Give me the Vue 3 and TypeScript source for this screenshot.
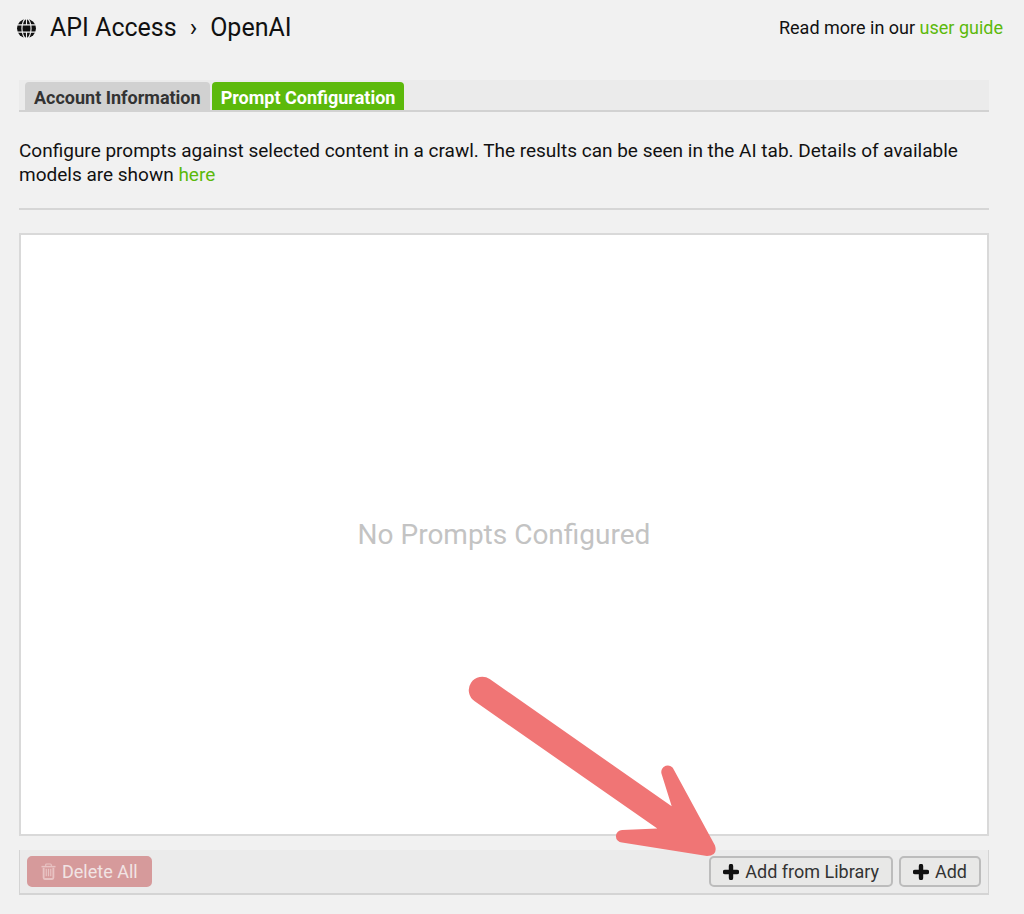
<script setup lang="ts">
import { ref } from 'vue'

interface Tab {
  id: string
  label: string
}

const tabs: Tab[] = [
  { id: 'account', label: 'Account Information' },
  { id: 'prompts', label: 'Prompt Configuration' },
]
const activeTab = ref('prompts')
</script>

<template>
  <main class="page">
    <header class="header">
      <svg class="globe" viewBox="0 0 20 20" aria-hidden="true">
        <circle cx="10" cy="10" r="10" fill="#111" />
        <g fill="none" stroke="#f1f1f1" stroke-width="1.2">
          <ellipse cx="10" cy="10" rx="4.8" ry="10.5" />
          <path d="M0 6.2H20M0 13.8H20M10 0V5.8M10 14.2V20" />
        </g>
      </svg>
      <h1 class="title">
        <span>API Access</span>
        <span class="chevron">›</span>
        <span>OpenAI</span>
      </h1>
      <p class="guide">Read more in our <a href="#guide">user guide</a></p>
    </header>

    <section class="content">
      <div class="tabs" role="tablist">
        <button
          v-for="tab in tabs"
          :key="tab.id"
          type="button"
          role="tab"
          class="tab"
          :class="{ active: tab.id === activeTab }"
          :aria-selected="tab.id === activeTab"
          @click="activeTab = tab.id"
        >
          {{ tab.label }}
        </button>
      </div>

      <p class="intro">
        Configure prompts against selected content in a crawl. The results can be seen in the AI tab.
        Details of available models are shown <a href="#models">here</a>
      </p>

      <div class="list">No Prompts Configured</div>

      <footer class="actions">
        <button type="button" class="btn danger" disabled>
          <svg class="trash" viewBox="0 0 16 18" fill="none" stroke="currentColor" aria-hidden="true">
            <path d="M5 3V2Q5 1 6 1H10Q11 1 11 2V3" stroke-width="1.2" />
            <path d="M0.5 3.8H15.5" stroke-width="1.6" />
            <path d="M2.8 5V15.5Q2.8 17 4 17H12Q13.2 17 13.2 15.5V5" stroke-width="2" />
            <path d="M5.6 6V14M8 6V14M10.4 6V14" stroke-width="1.3" />
          </svg>
          Delete All
        </button>
        <span class="spacer"></span>
        <button type="button" class="btn">
          <svg class="plus" viewBox="0 0 16 16" aria-hidden="true">
            <path d="M8 2V14M2 8H14" stroke="#111" stroke-width="4.4" stroke-linecap="round" />
          </svg>
          Add from Library
        </button>
        <button type="button" class="btn">
          <svg class="plus" viewBox="0 0 16 16" aria-hidden="true">
            <path d="M8 2V14M2 8H14" stroke="#111" stroke-width="4.4" stroke-linecap="round" />
          </svg>
          Add
        </button>
        <svg class="arrow" viewBox="0 0 250 182" aria-hidden="true">
          <path
            fill="#f07575"
            d="M21.7 3L203.7 130.3L193.6 98A6.3 6.3 0 0 1 206 94L247 169.5Q250 180 239 180L154 166.5A6.2 6.2 0 0 1 154.3 154L189.3 152.5L6.7 25.3A13.4 13.4 0 0 1 21.7 3Z"
          />
        </svg>
      </footer>
    </section>
  </main>
</template>

<style>
body {
  margin: 0;
  background: #f1f1f1;
}
</style>

<style scoped>
.page {
  box-sizing: border-box;
  display: flex;
  flex-direction: column;
  min-height: 100vh;
  padding: 12px 21px 19px 17px;
  font-family: Roboto, "Liberation Sans", sans-serif;
  font-size: 19px;
  line-height: 24px;
  color: #111;
}

a {
  color: #5cb90b;
  text-decoration: none;
}

.header {
  display: flex;
  align-items: center;
  height: 32px;
}

.globe {
  width: 19px;
  height: 19px;
  margin-right: 14px;
}

.title {
  display: flex;
  gap: 13px;
  margin: 0;
  font-size: 25px;
  font-weight: 400;
  line-height: 32px;
}

.guide {
  margin: 0 0 0 auto;
  font-size: 18px;
}

.content {
  display: flex;
  flex: 1;
  flex-direction: column;
  margin: 36px 14px 0 2px;
}

.tabs {
  display: flex;
  gap: 2px;
  padding: 2px 6px 0;
  background: #ebebeb;
  border-bottom: 2px solid #d2d2d2;
}

.tab {
  height: 28px;
  padding: 3px 9px 0;
  border: 0;
  border-radius: 4px 4px 0 0;
  background: #d1d1d1;
  color: #333;
  font: 700 18px/24px Roboto, "Liberation Sans", sans-serif;
}

.tab.active {
  background: #5cb90b;
  color: #fff;
}

.intro {
  margin: 0;
  padding: 27px 0 21px;
  border-bottom: 2px solid #d6d6d6;
}

.list {
  display: flex;
  flex: 1;
  align-items: center;
  justify-content: center;
  margin: 23px 0 14px;
  border: 2px solid #d9d9d9;
  background: #fff;
  color: #c3c3c3;
  font-size: 28px;
  line-height: 32px;
}

.actions {
  position: relative;
  display: flex;
  gap: 6px;
  padding: 6px 7px;
  border: solid #d4d4d4;
  border-width: 0 1px 2px;
  background: #ebebeb;
}

.spacer {
  flex: 1;
}

.btn {
  display: flex;
  align-items: center;
  gap: 6px;
  height: 31px;
  padding: 0 12px;
  border: 2px solid #bcbcbc;
  border-radius: 5px;
  background: #e8e8e7;
  color: #333;
  font: 18px/24px Roboto, "Liberation Sans", sans-serif;
}

.danger {
  border-color: #d69a9b;
  background: #d69a9b;
  color: #f1e4e4;
}

.trash {
  width: 15px;
  height: 17px;
  color: #e8c3c3;
}

.plus {
  width: 16px;
  height: 16px;
}

.arrow {
  position: absolute;
  right: 270px;
  bottom: 35px;
  width: 250px;
  height: 182px;
  pointer-events: none;
}
</style>
